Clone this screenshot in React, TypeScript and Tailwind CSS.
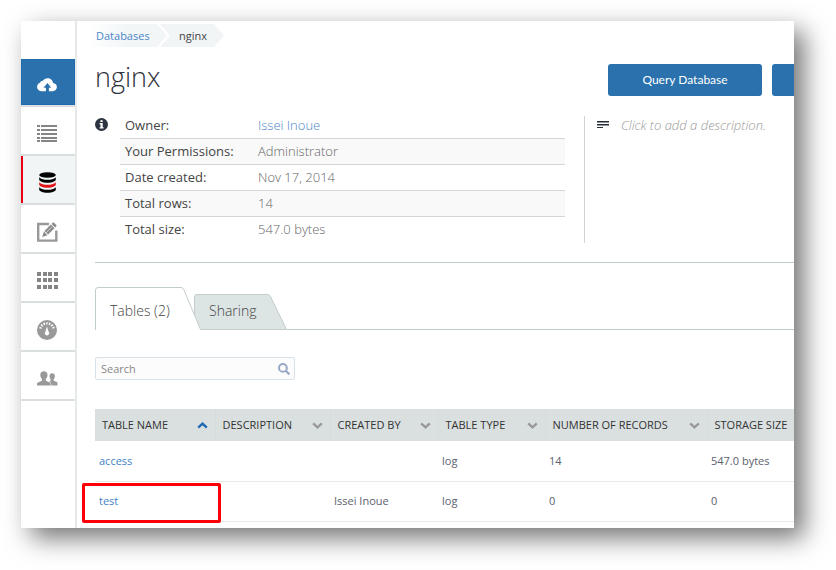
import React, { useState } from 'react';

interface InfoRow {
  label: string;
  value: string;
  link?: boolean;
}

interface TableRow {
  name: string;
  description: string;
  createdBy: string;
  type: string;
  records: string;
  size: string;
  highlighted?: boolean;
}

const infoRows: InfoRow[] = [
  { label: 'Owner:', value: 'Issei Inoue', link: true },
  { label: 'Your Permissions:', value: 'Administrator' },
  { label: 'Date created:', value: 'Nov 17, 2014' },
  { label: 'Total rows:', value: '14' },
  { label: 'Total size:', value: '547.0 bytes' },
];

const columns = [
  { title: 'TABLE NAME', width: 'w-[120px]', sort: 'asc' },
  { title: 'DESCRIPTION', width: 'w-[115px]', sort: 'none' },
  { title: 'CREATED BY', width: 'w-[108px]', sort: 'none' },
  { title: 'TABLE TYPE', width: 'w-[107px]', sort: 'none' },
  { title: 'NUMBER OF RECORDS', width: 'w-[162px]', sort: 'none' },
  { title: 'STORAGE SIZE', width: '', sort: null },
];

const tables: TableRow[] = [
  {
    name: 'access',
    description: '',
    createdBy: '',
    type: 'log',
    records: '14',
    size: '547.0 bytes',
  },
  {
    name: 'test',
    description: '',
    createdBy: 'Issei Inoue',
    type: 'log',
    records: '0',
    size: '0',
    highlighted: true,
  },
];

const UploadIcon = () => (
  <svg width="20" height="14" viewBox="0 0 20 14" fill="#fff">
    <path
      fillRule="evenodd"
      d="M4.6 13.2A4.4 4.4 0 0 1 .1 8.9c0-2 1.200-3.600 3-4.100C3.400 3.300 4.600 2.600 5.900 2.800 6.900 1.100 8.600.2 10.500.2c3 0 5.300 2.100 5.600 4.900 2.200.3 3.800 1.900 3.800 4 0 2.300-1.800 4.100-4.200 4.100h-3.800V9.700h2.300L10.400 5.100 6.600 9.700h2.300v3.500z"
    />
  </svg>
);

const ListIcon = () => (
  <svg width="20" height="17" viewBox="0 0 20 17" fill="#858585">
    {[0, 4, 8, 12, 15].map((y) => (
      <g key={y}>
        <rect x="0" y={y} width="3" height="2" />
        <rect x="4" y={y} width="16" height="2" />
      </g>
    ))}
  </svg>
);

const DatabaseIcon = () => (
  <svg width="17" height="21" viewBox="0 0 17 21">
    <ellipse cx="8.500" cy="3" rx="8.300" ry="2.800" fill="#000" />
    <path
      d="M.2 5.200C2 7.300 5 7.700 8.500 7.700s6.500-.4 8.300-2.500v2.400c0 1.900-3.700 3.200-8.300 3.200S.2 9.500.2 7.600z"
      fill="#000"
    />
    <path
      d="M.2 10.200c1.800 2.100 4.800 2.500 8.300 2.500s6.500-.4 8.300-2.500v2.400c0 1.900-3.700 3.200-8.300 3.200S.2 14.500.2 12.600z"
      fill="#e3151b"
    />
    <path
      d="M.2 15.200c1.800 2.100 4.800 2.500 8.300 2.500s6.500-.4 8.300-2.500v2.400c0 1.900-3.700 3.200-8.300 3.200S.2 19.500.2 17.600z"
      fill="#000"
    />
  </svg>
);

const EditIcon = () => (
  <svg width="21" height="20" viewBox="0 0 21 20">
    <path
      d="M12 2H1.200v16.600h18.100V8.500"
      fill="none"
      stroke="#999"
      strokeWidth="2.400"
    />
    <path d="M5.200 14.900l1.700-5.300 3.600 3.600z" fill="#8c8c8c" />
    <path d="M7.400 8.900l6.400-6.400 3.700 3.700-6.400 6.400z" fill="#8c8c8c" />
    <path
      d="M14.500 1.900l1.200-1.200c.4-.4 1-.4 1.400 0l2.200 2.200c.4.400.4 1 0 1.400l-1.200 1.200z"
      fill="#8c8c8c"
    />
    <path d="M9 10.800l5.600-5.600" stroke="#fff" strokeWidth=".6" />
  </svg>
);

const GridIcon = () => (
  <svg width="21" height="17" viewBox="0 0 21 17" fill="#858585">
    {[0, 6, 13].map((y) =>
      [0, 6, 11, 17].map((x) => (
        <rect key={`${x}-${y}`} x={x} y={y} width="4" height="4" />
      ))
    )}
  </svg>
);

const GaugeIcon = () => (
  <svg width="20" height="20" viewBox="0 0 20 20">
    <circle cx="10" cy="10" r="10" fill="#999" />
    <path
      d="M3.400 8.500A6.800 6.800 0 0 1 16.600 8.500"
      fill="none"
      stroke="#fff"
      strokeWidth="2.400"
      strokeDasharray="1.400 1.300"
    />
    <path d="M10 6.500l1.500 5.100a2.200 2.200 0 1 1-3 0z" fill="#fff" />
  </svg>
);

const UsersIcon = () => (
  <svg width="21" height="15" viewBox="0 0 21 15" fill="#999">
    <path d="M15.200 2.200c1.700 0 2.700 1.200 2.700 2.900 0 1.300-.5 2.500-1.200 3.100v1.600l3.100 1.300c.6.300.7.700.7 1.300v2h-6.200c0-2.300-.4-3.100-2.100-3.900l1.500-.8V8.200c-.8-.6-1.200-1.800-1.200-3.100 0-1.700 1-2.900 2.700-2.900z" />
    <path d="M6.900.3c2.200 0 3.600 1.400 3.600 3.600 0 1.700-.7 3.100-1.700 3.900v2l4 1.600c.7.300.9.800.9 1.500v1.500H0v-1.500c0-.7.300-1.200.9-1.500l4-1.600v-2C4 7 3.300 5.600 3.300 3.900 3.300 1.700 4.700.3 6.900.3z" />
  </svg>
);

const navItems = [
  { label: 'Jobs', icon: <ListIcon /> },
  { label: 'Databases', icon: <DatabaseIcon />, active: true },
  { label: 'New Query', icon: <EditIcon /> },
  { label: 'Apps', icon: <GridIcon /> },
  { label: 'Utilization', icon: <GaugeIcon /> },
  { label: 'Users', icon: <UsersIcon /> },
];

const Sidebar: React.FC = () => (
  <nav className="w-14 shrink-0 border-r-2 border-[#e6e9ea] pt-[38px]">
    <div className="border-b-2 border-[#d9dfdf]">
      <button
        aria-label="Upload"
        className="flex h-[46px] w-full items-center justify-center border border-[#1f6ab0] bg-[#2a71ae] pt-1.5 pr-0.5"
      >
        <UploadIcon />
      </button>
    </div>
    {navItems.map((item) => (
      <a
        key={item.label}
        href="#"
        aria-label={item.label}
        className={`flex h-[49px] items-center justify-center border-b-2 border-[#d9dfdf] pt-1.5 pr-0.5 ${
          item.active
            ? 'bg-[#f1f5f6] shadow-[inset_2px_0_0_#e60012]'
            : 'bg-white'
        }`}
      >
        {item.icon}
      </a>
    ))}
  </nav>
);

const Breadcrumb: React.FC = () => (
  <div className="flex h-[23px] items-center text-[11px]">
    <div className="relative flex h-full w-[72px] items-center">
      <svg
        className="absolute inset-y-0 -left-2"
        width="138"
        height="23"
        viewBox="0 0 138 23"
      >
        <defs>
          <linearGradient id="crumb" x1="0" x2="1">
            <stop offset="0" stopColor="#fff" />
            <stop offset=".5" stopColor="#f2f6f7" />
          </linearGradient>
        </defs>
        <path d="M0 0h70l10 11.500L70 23H0z" fill="url(#crumb)" />
        <path d="M73 0h54l10 11.500L127 23H73l10-11.500z" fill="#f1f5f6" />
      </svg>
      <a href="#" className="relative pt-0.5 pl-px text-[#4a86c8]">
        Databases
      </a>
    </div>
    <span className="relative pt-0.5 pl-3 text-[#444]">nginx</span>
  </div>
);

const DatabaseInfo: React.FC = () => (
  <section className="flex pt-2">
    <svg className="mt-1.5 shrink-0" width="13" height="13" viewBox="0 0 13 13">
      <circle cx="6.500" cy="6.500" r="6.500" fill="#2b3440" />
      <path
        d="M5.400 2.200h2.300v1.900H5.400zM4.600 5.100h3.100v4.200h.9v1.300h-4V9.300h.9V6.400h-.9z"
        fill="#fff"
      />
    </svg>
    <dl className="mr-[19px] ml-3 flex-1 pt-px text-[13px]">
      {infoRows.map((row) => (
        <div
          key={row.label}
          className="flex h-[26px] items-center border-b border-[#d4d6d7] px-[5px] last:border-b-0 even:bg-[#f9f9f9]"
        >
          <dt className="w-[133px] text-[#444]">{row.label}</dt>
          <dd className="font-light text-[#666]">
            {row.link ? (
              <a href="#" className="text-[#4a86c8]">
                {row.value}
              </a>
            ) : (
              row.value
            )}
          </dd>
        </div>
      ))}
    </dl>
    <div className="mt-1 flex w-[210px] items-start border-l border-[#cfd3d5] pl-3">
      <svg
        className="mt-1 shrink-0"
        width="12"
        height="9"
        viewBox="0 0 12 9"
        fill="#252d3a"
      >
        <rect y="1" width="12" height="1" />
        <rect y="2" width="12" height="1" opacity=".5" />
        <rect y="4" width="12" height="1" />
        <rect y="5" width="12" height="1" opacity=".5" />
        <rect y="7" width="6" height="1" />
      </svg>
      <button className="ml-3 h-[18px] text-[13px] leading-4 font-light whitespace-nowrap text-[#999] italic">
        Click to add a description.
      </button>
    </div>
  </section>
);

const Tabs: React.FC = () => {
  const [tab, setTab] = useState('tables');

  return (
    <div
      role="tablist"
      className="relative mt-6 flex h-[43px] items-end text-sm font-light text-[#444]"
    >
      <svg
        className="absolute bottom-0 left-0"
        width="193"
        height="43"
        viewBox="0 0 193 43"
        stroke="#c3cccd"
      >
        <path
          d="M99.500 42.500V10q0-2.500 2.500-2.500h70q2.500 0 3.500 2l16 33z"
          fill="#dce4e4"
        />
        <path
          d="M.5 43V3Q.5.500 3 .5h83q2 0 3 2.500l16.500 39.500V44H.5z"
          fill="#fff"
          stroke="none"
        />
        <path d="M.5 43V3Q.5.500 3 .5h83q2 0 3 2.500l16.500 39.500" fill="none" />
      </svg>
      <button
        role="tab"
        aria-selected={tab === 'tables'}
        onClick={() => setTab('tables')}
        className="relative h-[38px] w-[105px] pl-[15px] text-left"
      >
        Tables (2)
      </button>
      <button
        role="tab"
        aria-selected={tab === 'sharing'}
        onClick={() => setTab('sharing')}
        className="relative h-[38px] w-[87px] pl-[9px] text-left"
      >
        Sharing
      </button>
      <div className="flex-1 border-b border-[#c3cccd]" />
    </div>
  );
};

const SortArrow = ({ sort }: { sort: string }) => (
  <svg
    width="11"
    height="7"
    viewBox="0 0 11 7"
    fill="none"
    strokeWidth="2.400"
    stroke={sort === 'asc' ? '#1f6ab0' : '#999'}
  >
    <path
      d={
        sort === 'asc'
          ? 'M1.200 5.700l4.300-4 4.300 4'
          : 'M1.200 1.300l4.300 4 4.300-4'
      }
    />
  </svg>
);

const TableList: React.FC = () => (
  <table className="mt-[29px] w-full table-fixed border-collapse text-[11px]">
    <thead>
      <tr className="h-8 bg-[#dae0e0] text-[#333]">
        {columns.map((col) => (
          <th
            key={col.title}
            className={`${col.width} border-r border-[#d5dcdc] px-[7px] text-left font-normal last:border-r-0 last:pr-0`}
          >
            <div className="flex items-center justify-between whitespace-nowrap">
              {col.title}
              {col.sort && <SortArrow sort={col.sort} />}
            </div>
          </th>
        ))}
      </tr>
    </thead>
    <tbody className="text-[#5c616e]">
      {tables.map((table) => (
        <tr key={table.name} className="h-10 border-b border-[#e8eaea]">
          <td className="relative pl-1">
            <a href="#" className="text-[#3f7fc4]">
              {table.name}
            </a>
            {table.highlighted && (
              <span className="pointer-events-none absolute top-px -right-1.5 -bottom-0.5 -left-[13px] rounded-xs border-3 border-[#fb0007]" />
            )}
          </td>
          <td className="pl-1">{table.description}</td>
          <td className="pl-1">{table.createdBy}</td>
          <td className="pl-1">{table.type}</td>
          <td className="pl-1">{table.records}</td>
          <td className="pl-1">{table.size}</td>
        </tr>
      ))}
    </tbody>
  </table>
);

const App: React.FC = () => {
  return (
    <div className="bg-white pt-[21px] pr-[42px] pb-[42px] pl-[21px] font-['Open_Sans',sans-serif]">
      <div className="flex bg-white shadow-[10px_10px_24px_0px_rgba(0,0,0,0.55)]">
        <Sidebar />
        <main className="min-w-0 flex-1 overflow-hidden pt-[3px] pb-1.5 pl-[18px]">
          <Breadcrumb />
          <header className="flex items-start justify-between">
            <h1 className="mt-2.5 text-[27px] leading-10 font-light text-[#2f323d]">
              nginx
            </h1>
            <div className="mt-[17px] mb-2 flex gap-2.5 font-[Lato,sans-serif] text-xs text-white">
              <button className="h-8 w-[154px] rounded-[3px] bg-[#2a71ae]">
                Query Database
              </button>
              <button
                aria-label="More actions"
                className="h-8 w-[22px] rounded-l-[3px] bg-[#2a71ae]"
              />
            </div>
          </header>
          <DatabaseInfo />
          <hr className="mt-[19px] border-t border-[#c3cccd]" />
          <Tabs />
          <div className="mt-[27px] flex h-[23px] w-[200px] items-center rounded-xs border border-[#d9e2e9] bg-[#fcfcfc] pr-1 pl-[5px]">
            <input
              type="text"
              aria-label="Search"
              placeholder="Search"
              className="min-w-0 flex-1 bg-transparent pt-0.5 text-[11px] outline-none placeholder:text-[#888]"
            />
            <svg
              width="12"
              height="12"
              viewBox="0 0 12 12"
              fill="none"
              stroke="#96a8c5"
              strokeWidth="2"
            >
              <circle cx="4.900" cy="4.900" r="3.900" />
              <path d="M7.800 7.800l3.600 3.600" strokeWidth="2.200" />
            </svg>
          </div>
          <TableList />
        </main>
      </div>
    </div>
  );
};

export default App;
